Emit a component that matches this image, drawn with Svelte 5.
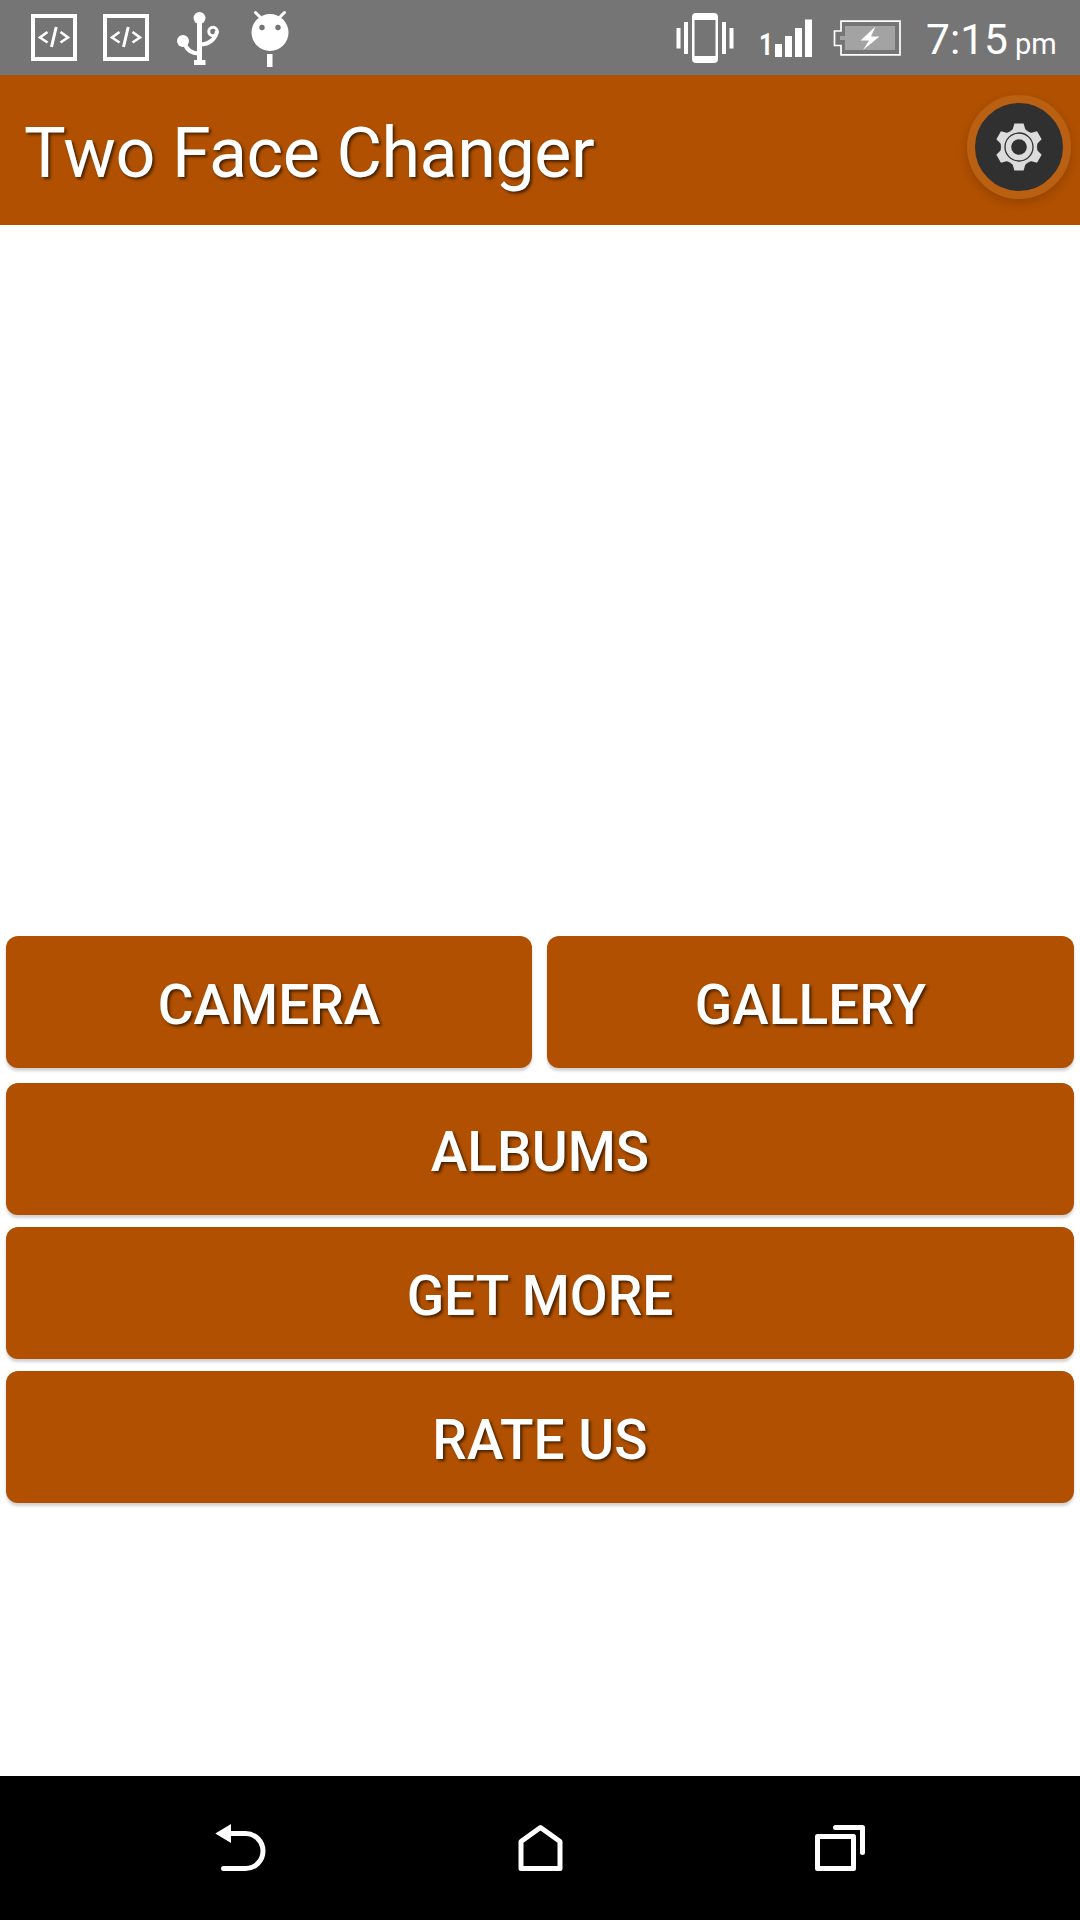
<script lang="ts">
	const sources = ['Camera', 'Gallery'];
	const actions = ['Albums', 'Get More', 'Rate Us'];
	const teeth = [0, 60, 120, 180, 240, 300];
</script>

<div class="screen">
	<div class="status">
		<div class="notifications">
			{#each [1, 2] as n (n)}
				<svg class="dev" width="46" height="47" viewBox="0 0 46 47">
					<rect x="2" y="2" width="42" height="43" fill="none" stroke="#fff" stroke-width="4" />
					<path d="M16.500 18 9 23.500l7.500 5M29.500 18l7.500 5.500-7.500 5" fill="none" stroke="#fff" stroke-width="2.600" />
					<path d="M25.200 13 20.500 33" stroke="#fff" stroke-width="3" />
				</svg>
			{/each}
			<svg class="usb" width="44" height="56" viewBox="176 11 44 56">
				<g fill="none" stroke="#fff" stroke-width="4.500">
					<path d="M199.500 18v44" stroke-width="5" />
					<path d="M184.500 43c2 7 7 10.500 15 10.500" stroke-width="4" />
					<path d="M217 31c-1 7-7 13.500-17 13.500" stroke-width="4" />
					<circle cx="213" cy="31.500" r="4.200" stroke-width="3" />
				</g>
				<g fill="#fff">
					<circle cx="199.500" cy="18" r="6" />
					<circle cx="183" cy="41" r="6" />
					<rect x="194" y="60" width="11.500" height="5" />
				</g>
			</svg>
			<svg width="40" height="60" viewBox="250 9 40 60">
				<path d="M255.500 12.500l6 6M284.500 12.500l-6 6" stroke="#fff" stroke-width="3" stroke-linecap="round" />
				<circle cx="270" cy="32.500" r="18.500" fill="#fff" />
				<circle cx="262" cy="27.500" r="2.700" fill="#757575" />
				<circle cx="278" cy="27.500" r="2.700" fill="#757575" />
				<rect x="267" y="54" width="5.500" height="13" fill="#fff" />
			</svg>
		</div>

		<div class="system">
			<svg class="vibrate" width="58" height="52" viewBox="676 11 58 52" fill="#fff">
				<path fill-rule="evenodd" d="M696 12h18a4 4 0 0 1 4 4v42a4 4 0 0 1-4 4h-18a4 4 0 0 1-4-4V16a4 4 0 0 1 4-4zm-1.500 7v36h21V19z" />
				<rect x="676.500" y="27" width="4" height="20.500" />
				<rect x="684" y="21" width="4" height="32" />
				<rect x="722" y="21" width="4" height="32" />
				<rect x="729.500" y="27" width="4" height="20.500" />
			</svg>
			<span class="sim">1</span>
			<svg class="signal" width="37" height="38" viewBox="775 18 37 38" fill="#fff">
				<rect x="775" y="43" width="7" height="13" />
				<rect x="785" y="35" width="7" height="21" />
				<rect x="795" y="27" width="7" height="29" />
				<rect x="805" y="18.500" width="7" height="37.500" />
			</svg>
			<svg class="battery" width="68" height="36" viewBox="833 19.500 68 36">
				<path d="M841 20.700h59v33.600h-59V45h-6.500V30.500h6.500z" fill="none" stroke="#fff" stroke-width="1.700" />
				<path d="M845 25.500h50v24h-50v-10h-5v-4h5z" fill="#a3a3a3" />
				<path d="M875.500 26 860.500 40h8.500l-6 9.500L879.500 36H871z" fill="#fff" />
			</svg>
			<span class="time">7:15</span>
			<span class="meridiem">pm</span>
		</div>
	</div>

	<header class="appbar">
		<h1>Two Face Changer</h1>
		<button class="settings" aria-label="Settings">
			<svg width="52" height="52" viewBox="-26 -26 52 52">
				<g fill="#dcdcdc">
					<circle r="17.800" />
					{#each teeth as angle (angle)}
						<path d="M-4.600-23.500h9.200l1.600 5.500q.8 1.500 2.500 2l-2 6H-6.700l-2-6q1.700-.5 2.500-2z" transform="rotate({angle})" />
					{/each}
				</g>
				<circle r="14" fill="none" stroke="#303030" stroke-width="1.300" />
				<circle r="7.800" fill="#303030" />
			</svg>
		</button>
	</header>

	<main>
		<div class="row">
			{#each sources as label (label)}
				<button class="btn">{label}</button>
			{/each}
		</div>
		<div class="stack">
			{#each actions as label (label)}
				<button class="btn">{label}</button>
			{/each}
		</div>
	</main>

	<nav>
		<svg width="54" height="52" viewBox="214 1822 54 52">
			<path d="M228 1833.500h17.500a17.500 17.500 0 0 1 0 35H223.500" fill="none" stroke="#fff" stroke-width="5" stroke-linecap="round" />
			<path d="M215.300 1833.500l15.700-9.500v19z" fill="#fff" />
		</svg>
		<svg width="54" height="52" viewBox="513.500 1822 54 52">
			<path d="M520.500 1868.500V1841.500L540 1827.500l19.500 14v27z" fill="none" stroke="#fff" stroke-width="5" stroke-linejoin="round" />
		</svg>
		<svg width="54" height="52" viewBox="813 1822 54 52" fill="none" stroke="#fff" stroke-width="5" stroke-linejoin="round" stroke-linecap="round">
			<path d="M817.500 1836.500h36v32h-36z" />
			<path d="M835.500 1827.500h27v25" />
		</svg>
	</nav>
</div>

<style>
	:global(body) {
		background: #fff;
	}

	.screen {
		width: 1080px;
		height: 1920px;
		display: flex;
		flex-direction: column;
		overflow: hidden;
		background: #fff;
		color: #fff;
		font-family: Roboto, 'Noto Sans', sans-serif;
	}
	svg {
		display: block;
		flex: none;
	}
	button {
		border: 0;
		padding: 0;
		color: inherit;
		font-family: inherit;
	}

	.status {
		height: 75px;
		flex: none;
		display: flex;
		justify-content: space-between;
		padding: 0 25px 0 31px;
		background: #757575;
	}
	.notifications,
	.system {
		display: flex;
		align-items: center;
	}
	.dev {
		margin-right: 26px;
	}
	.usb {
		margin: 2px 30px 0 1px;
	}
	.notifications svg:last-child {
		margin-top: 2px;
	}
	.vibrate {
		margin-right: 25px;
	}
	.sim {
		width: 16px;
		font-size: 31px;
		font-weight: 700;
		line-height: 36px;
		padding-top: 15px;
		transform: scaleX(0.8);
		transform-origin: left;
	}
	.signal {
		margin-right: 21px;
	}
	.battery {
		margin-right: 25px;
	}
	.time {
		width: 89px;
		font-size: 42.5px;
		line-height: 50px;
		padding-top: 5px;
	}
	.meridiem {
		width: 40px;
		font-size: 29px;
		line-height: 34px;
		padding-top: 12px;
	}

	.appbar {
		height: 150px;
		flex: none;
		display: flex;
		align-items: center;
		justify-content: space-between;
		padding: 0 9px 0 24px;
		background: #b05000;
	}
	h1 {
		margin: 6px 0 0;
		font-size: 70px;
		font-weight: 400;
		line-height: 82px;
		letter-spacing: -0.45px;
		text-shadow: 2px 2px 3px rgba(0, 0, 0, 0.6);
	}
	.settings {
		width: 104px;
		height: 104px;
		margin-bottom: 7px;
		display: flex;
		align-items: center;
		justify-content: center;
		border: 8.500px solid #ba6013;
		border-radius: 50%;
		background: #303030;
		box-shadow: 0 4px 10px rgba(0, 0, 0, 0.16);
	}

	main {
		flex: 1;
		padding: 711px 6px 0;
	}
	.row {
		display: grid;
		grid-template-columns: 526px 1fr;
		gap: 15px;
		margin-bottom: 15px;
	}
	.stack {
		display: grid;
		gap: 12px;
	}
	.btn {
		height: 132px;
		padding-top: 5px;
		border-radius: 12px;
		background: #b05000;
		font-size: 55px;
		font-weight: 500;
		line-height: 64px;
		text-transform: uppercase;
		text-shadow: 2px 2px 3px rgba(0, 0, 0, 0.6);
		box-shadow: 0 3px 3px rgba(0, 0, 0, 0.18);
	}

	nav {
		height: 144px;
		flex: none;
		display: flex;
		align-items: center;
		justify-content: space-between;
		padding: 0 213px 0 214px;
		background: #000;
	}
</style>
